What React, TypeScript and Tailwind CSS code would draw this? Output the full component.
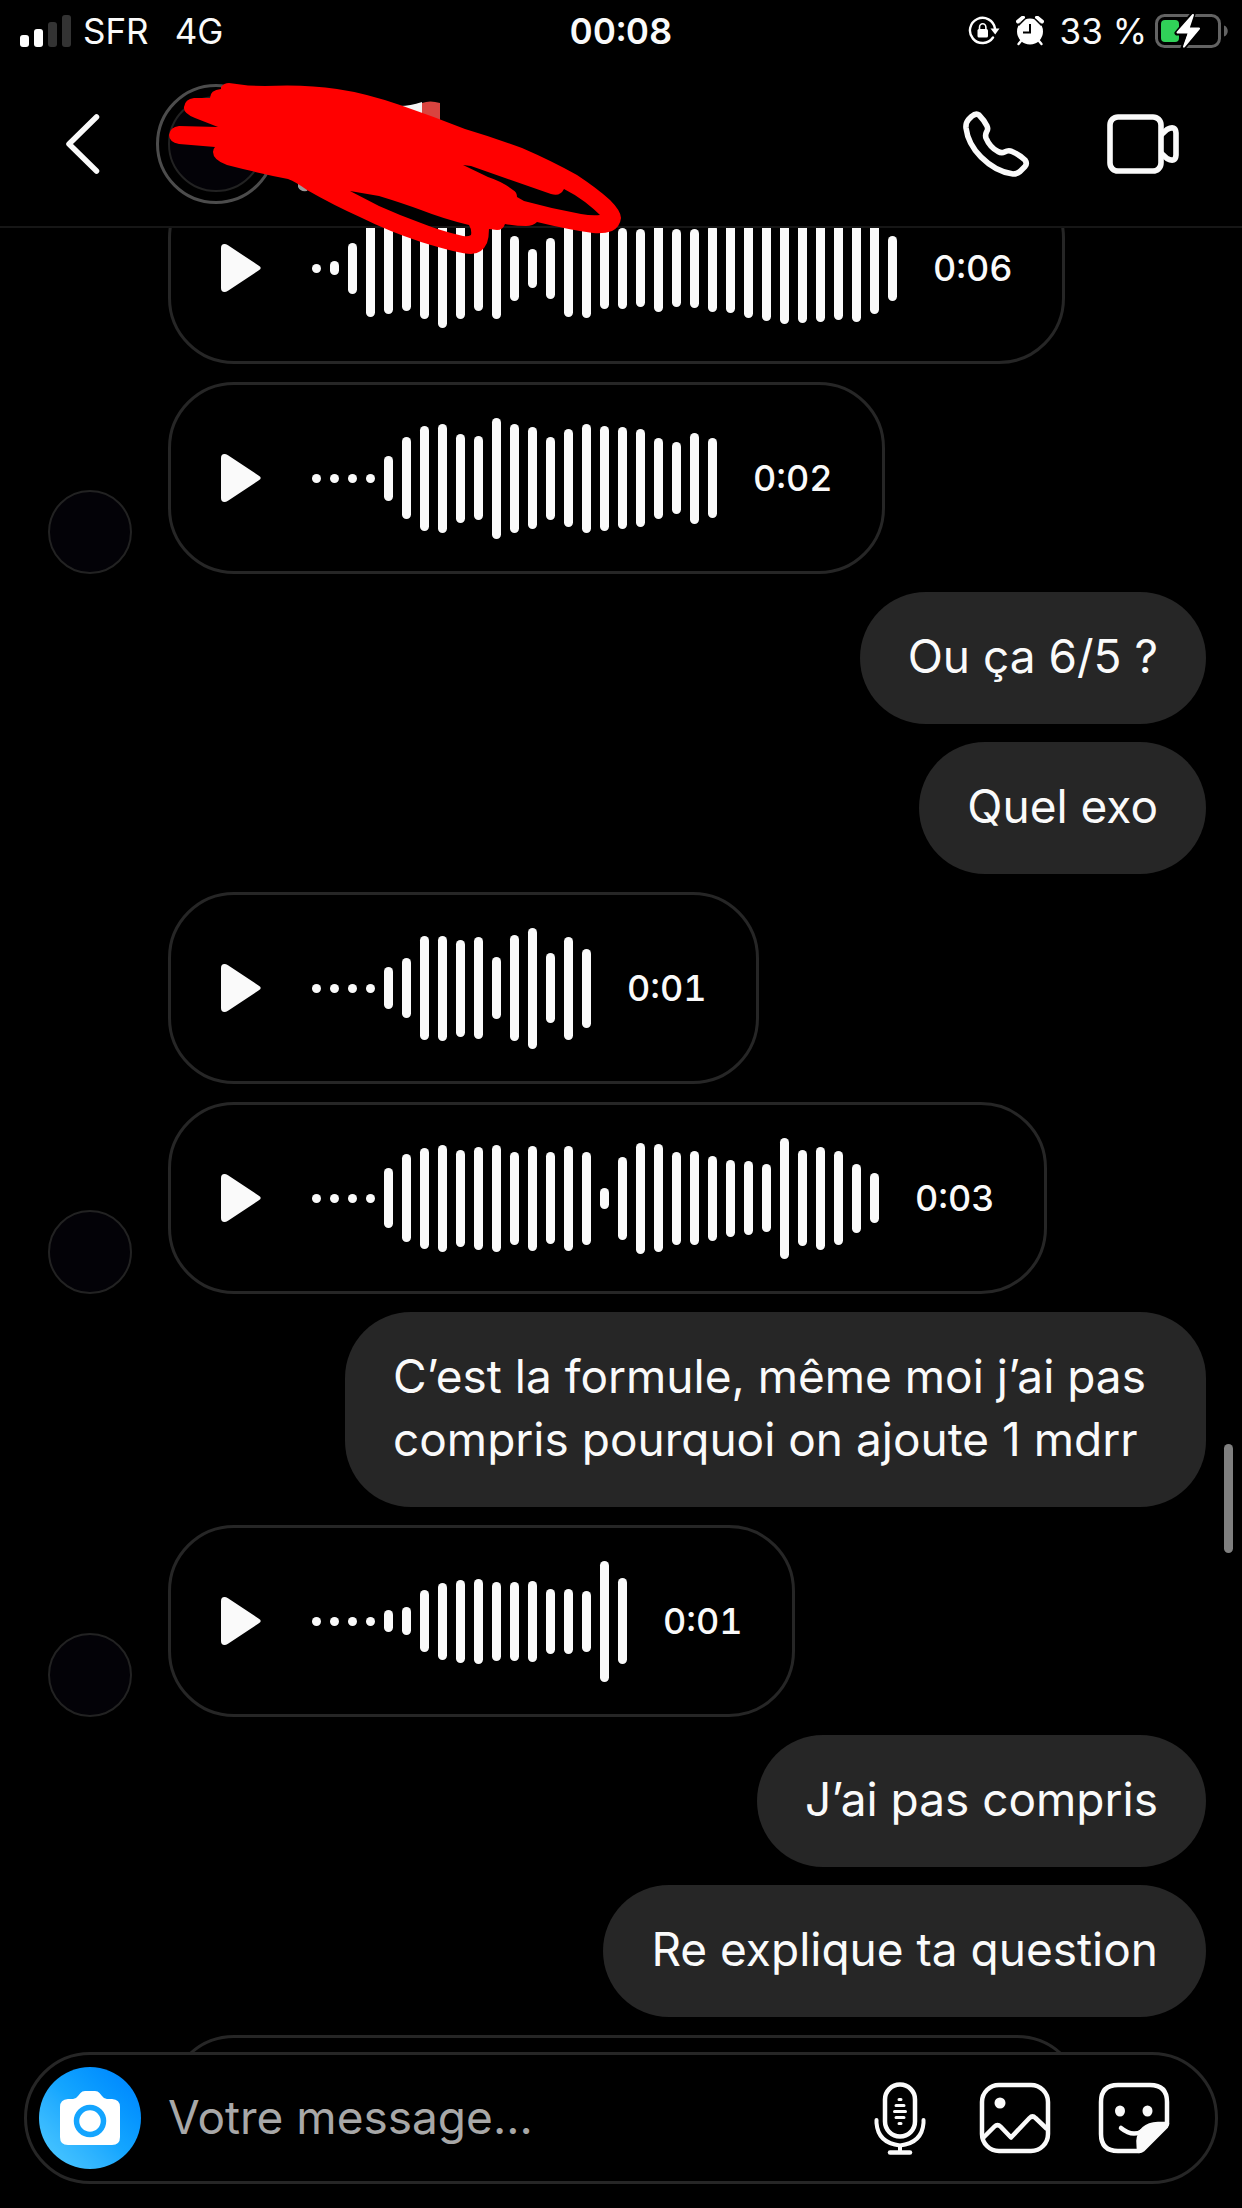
import React from "react";

type Message =
  | { kind: "voice"; duration?: string; bars: number[]; avatar?: boolean }
  | { kind: "text"; text: string };

const messages: Message[] = [
  {
    kind: "voice",
    duration: "0:06",
    bars: [
      9, 14, 51, 97, 91, 85, 101, 119, 101, 85, 101, 65, 39, 61, 98, 99, 82, 81, 78, 88, 78, 79, 87,
      89, 99, 105, 112, 110, 107, 103, 107, 91, 65,
    ],
  },
  {
    kind: "voice",
    duration: "0:02",
    avatar: true,
    bars: [
      9, 9, 9, 9, 45, 82, 105, 109, 89, 84, 121, 109, 102, 83, 98, 109, 105, 102, 98, 81, 72, 91, 80,
    ],
  },
  { kind: "text", text: "Ou ça 6/5 ?" },
  { kind: "text", text: "Quel exo" },
  {
    kind: "voice",
    duration: "0:01",
    bars: [9, 9, 9, 9, 42, 60, 104, 105, 97, 102, 62, 106, 121, 70, 103, 79],
  },
  {
    kind: "voice",
    duration: "0:03",
    avatar: true,
    bars: [
      9, 9, 9, 9, 60, 88, 101, 107, 97, 103, 107, 93, 105, 92, 105, 93, 21, 83, 111, 108, 93, 94, 85,
      77, 74, 68, 121, 96, 103, 94, 69, 50,
    ],
  },
  { kind: "text", text: "C’est la formule, même moi j’ai pas compris pourquoi on ajoute 1 mdrr" },
  {
    kind: "voice",
    duration: "0:01",
    avatar: true,
    bars: [9, 9, 9, 9, 22, 28, 62, 77, 83, 85, 79, 79, 81, 65, 65, 61, 121, 86],
  },
  { kind: "text", text: "J’ai pas compris" },
  { kind: "text", text: "Re explique ta question" },
  {
    kind: "voice",
    bars: [
      9, 9, 9, 9, 45, 60, 80, 95, 99, 84, 97, 105, 90, 82, 98, 101, 92, 81, 72, 91, 80, 87, 89, 99,
      105, 112, 110, 96, 103, 94, 80, 69, 50, 40,
    ],
  },
];

function StatusBar() {
  return (
    <div className="grid h-[62px] grid-cols-[1fr_auto_1fr] items-center px-[14px] text-[35px] leading-[60px]">
      <div className="flex items-center pl-[6px]">
        <svg viewBox="0 0 51 32" className="h-8 w-[51px]" aria-hidden="true">
          <rect x="0" y="20" width="9" height="12" rx="3" fill="#fff" />
          <rect x="14" y="14" width="9" height="18" rx="3" fill="#fff" />
          <rect x="28" y="7" width="9" height="25" rx="3" fill="#333" />
          <rect x="42" y="0" width="9" height="32" rx="3" fill="#333" />
        </svg>
        <span className="ml-3">SFR</span>
        <span className="ml-[26px]">4G</span>
      </div>
      <time className="text-[36px] font-semibold tabular-nums">00:08</time>
      <div className="flex items-center justify-end">
        <svg viewBox="0 0 32 30" className="h-[30px] w-8" aria-label="Rotation verrouillée">
          <path
            d="M27 12.5A12.6 12.6 0 1 0 25 21.5"
            fill="none"
            stroke="#fff"
            strokeWidth="2.4"
            strokeLinecap="round"
          />
          <path d="M22.5 12.5h9l-4.3 6z" fill="#fff" />
          <rect x="9.5" y="13" width="10.5" height="8.5" rx="1.5" fill="#fff" />
          <path d="M11.5 14v-2.6a3.2 3.6 0 0 1 6.4 0V14" fill="none" stroke="#fff" strokeWidth="1.6" />
        </svg>
        <svg viewBox="0 0 28 30" className="ml-4 h-[30px] w-7" aria-label="Alarme">
          <circle cx="14" cy="15.5" r="13" fill="#fff" />
          <path d="M2 5.5 7 1.5M26 5.5l-5-4" stroke="#fff" strokeWidth="4" strokeLinecap="round" />
          <path d="m5 25-2.5 3M23 25l2.5 3" stroke="#fff" strokeWidth="2.4" strokeLinecap="round" />
          <path d="M14 8v8.5H7" fill="none" stroke="#000" strokeWidth="2" />
          <path d="M2.5 9.5 9 3M25.5 9.5 19 3" stroke="#000" strokeWidth="1.3" />
        </svg>
        <span className="ml-4">33 %</span>
        <svg viewBox="0 0 73 36" className="ml-2 h-9 w-[73px]" aria-label="Batterie en charge">
          <rect x="1.5" y="2.5" width="63" height="31" rx="8" fill="none" stroke="#636363" strokeWidth="3" />
          <path d="M69 12.5c5 1.5 5 9.5 0 11z" fill="#636363" />
          <rect x="6" y="7" width="18" height="22" rx="4" fill="#30d158" />
          <path
            d="M38 1 22 20h11l-5 15 17-20H34z"
            fill="#fff"
            stroke="#000"
            strokeWidth="5"
            strokeLinejoin="round"
            paintOrder="stroke"
          />
          <path d="M38 2 22.5 19.5H34l-5 14L44 15.5H33.5z" fill="#fff" stroke="#fff" strokeWidth="2" strokeLinejoin="round" />
        </svg>
      </div>
    </div>
  );
}

function Scribble() {
  return (
    <svg
      viewBox="160 72 480 188"
      className="pointer-events-none absolute top-[72px] left-40 z-10 h-[188px] w-[480px]"
      aria-hidden="true"
    >
      <path d="M400 106q10 0 22-4v24h-22z" fill="#f4f4f4" />
      <path d="M422 103q8-3 18 0v20h-18z" fill="#d9443f" />
      <path d="M298 180v7q2 5 9 4l3-6z" fill="#9a9a9a" />
      <path
        fill="#f00"
        fillRule="evenodd"
        d="M221 87Q224 83 229 83L248 85.5L265 86Q305 84 337 89Q365 93 400 105Q432 116 465 129Q495 138 522 148Q552 161 577 175Q598 189 610 200Q621 211 621 218Q620 227 612 231Q604 234 593 233Q570 230 537 222Q533 226 526 226Q517 226 505 224Q503 230 497 230L489 229Q489 237 487 243Q482 254 471 254Q460 254 421 242Q388 231 362 218Q333 205 307 190Q296 182 288 179Q258 173 227 165Q213 160 213 152Q213 149 215 147L179 144Q169 142 169 135Q170 127 179 126L218 127L195 118Q183 113 184 107Q185 99 194 98L210 98Q210 90 221 89Z
        M463 165L471 166L551 194Q560 197 564 189Q576 195 585 202Q594 209 600 215Q592 216 581 214Q553 209 524 201L517 197Q517 192 513 190Q503 182 488 177Z
        M350 191L379 196Q402 203 421 210Q444 219 469 225Q472 230 471 235Q468 237 463 236Q441 231 421 223Q399 215 379 206Z"
      />
    </svg>
  );
}

function Header() {
  return (
    <header className="relative shrink-0 border-b-2 border-[#161616]">
      <StatusBar />
      <div className="flex h-[164px] items-center pr-[62px] pl-[62px]">
        <button type="button" aria-label="Retour" className="mr-[54px]">
          <svg viewBox="0 0 40 64" className="h-16 w-10" fill="none" stroke="#fafafa" strokeWidth="5.5" strokeLinecap="round" strokeLinejoin="round">
            <path d="M34.5 5 7 32l27.5 27" />
          </svg>
        </button>
        <div className="flex size-[120px] items-center justify-center rounded-full border-3 border-[#4c4c4c]">
          <div className="size-24 rounded-full border-2 border-[#222] bg-[#030207]" />
        </div>
        <div className="ml-auto flex items-center gap-[76px]">
          <button type="button" aria-label="Appel audio">
            <svg viewBox="0 0 68 68" className="size-[68px]" fill="none" stroke="#fafafa" strokeWidth="5.6" strokeLinejoin="round">
              <path d="M9.5 6.5 6.5 9.5Q3.5 13 4 18Q6 34 19 47Q34 62 51 64Q55 64 58 61.5L63 56.5Q65.5 53.5 63 50Q57 44.5 50 41.5Q46.5 39.8 42.5 42Q39.5 43.5 36 41.5Q28 37.5 24 28Q23 25 24.5 22Q26.5 19.5 25 16Q22 10 17 5Q14 2.5 9.5 6.5Z" />
            </svg>
          </button>
          <button type="button" aria-label="Appel vidéo">
            <svg viewBox="0 0 74 64" className="h-16 w-[74px]" fill="none" stroke="#fafafa" strokeWidth="5.6" strokeLinejoin="round">
              <rect x="4" y="5" width="51" height="54" rx="8" />
              <path d="M55 23 61 17.5Q69.5 13 70 21V43Q69.5 51 61 46.5L55 41" />
            </svg>
          </button>
        </div>
      </div>
      <Scribble />
    </header>
  );
}

function VoiceMessage({ duration, bars, avatar }: { duration?: string; bars: number[]; avatar?: boolean }) {
  return (
    <li className="flex shrink-0 items-end gap-9 self-start pl-12">
      {avatar ? (
        <div className="size-[84px] rounded-full border-2 border-[#222] bg-[#030207]" />
      ) : (
        <div className="size-[84px]" />
      )}
      <div className="flex h-48 items-center rounded-[66px] border-3 border-[#262626] pl-[50px]">
        <button type="button" aria-label="Lire le message vocal">
          <svg viewBox="0 0 40 48" className="h-12 w-10" fill="#fafafa" aria-hidden="true">
            <path d="M0 4Q0 0 3.5 0Q5 0 7 1.3L37.5 21.5Q42 24 37.5 26.5L7 46.7Q5 48 3.5 48Q0 48 0 44Z" />
          </svg>
        </button>
        <div className="ml-[51px] flex items-center gap-[9px]">
          {bars.map((height, i) => (
            <span key={i} className="w-[9px] rounded-full bg-[#fafafa]" style={{ height }} />
          ))}
        </div>
        <span className="ml-9 w-[129px] text-[36px] leading-[44px] font-medium tabular-nums">{duration}</span>
      </div>
    </li>
  );
}

function TextMessage({ text }: { text: string }) {
  return (
    <li className="mr-9 max-w-[861px] shrink-0 self-end rounded-[66px] bg-[#262626] px-12 pt-[33px] pb-9 text-[46px] leading-[63px]">
      {text}
    </li>
  );
}

function Composer() {
  return (
    <footer className="shrink-0 px-6 pb-6">
      <form
        className="flex h-[132px] items-center rounded-full border-3 border-[#262626] pr-[44px] pl-3"
        onSubmit={(e) => e.preventDefault()}
      >
        <button
          type="button"
          aria-label="Appareil photo"
          className="flex size-[102px] shrink-0 items-center justify-center rounded-full bg-linear-to-tr from-[#50ccff] via-[#14a6ff] to-[#0080ff]"
        >
          <svg viewBox="0 0 60 54" className="h-[54px] w-[60px]" fill="#fff">
            <path d="M8 8H13Q16 8 18 5L20.5 2Q22 0 25 0H35Q38 0 39.5 2L42 5Q44 8 47 8H52Q60 8.5 60 16V46Q60 54 52 54H8Q0 54 0 46V16Q0 8.5 8 8Z" />
            <circle cx="30" cy="30" r="13.5" fill="none" stroke="#14a5ff" strokeWidth="5.5" />
          </svg>
        </button>
        <input
          type="text"
          aria-label="Votre message"
          placeholder="Votre message..."
          className="ml-[27px] min-w-0 flex-1 bg-transparent pb-[2px] text-[46px] leading-[63px] outline-none placeholder:text-[#a8a8a8]"
        />
        <div className="flex items-center gap-[45px]">
          <button type="button" aria-label="Message vocal" className="flex w-[66px] justify-center">
            <svg viewBox="0 0 54 74" className="h-[74px] w-[54px]" fill="none" stroke="#fafafa" strokeWidth="4" strokeLinecap="round">
              <rect x="12" y="3.5" width="30" height="52" rx="15" strokeWidth="4.5" />
              <path d="M3.5 39v3Q5 62 27 64.5Q49 62 50.5 42v-3M27 65v5" />
              <path d="M17 71.5H37" strokeWidth="4.5" />
              <path d="M26 18.5h2M23 24.5h8M21.5 30.5h11M23 36.5h8M26 42.5h2" strokeWidth="3" />
            </svg>
          </button>
          <button type="button" aria-label="Galerie">
            <svg viewBox="0 0 74 74" className="size-[74px]" fill="none" stroke="#fafafa" strokeWidth="4.5" strokeLinejoin="round">
              <rect x="4" y="4" width="66" height="66" rx="17" />
              <circle cx="22" cy="22" r="5.5" fill="#fafafa" stroke="none" />
              <path d="M5 57 16.5 45.5Q19.5 42.5 22.5 45.5L33 56.5L51.5 37Q54.5 34 57.5 37L69 48" />
            </svg>
          </button>
          <button type="button" aria-label="Autocollants">
            <svg viewBox="0 0 74 74" className="size-[74px]" fill="none" stroke="#fafafa" strokeWidth="4.5" strokeLinecap="round" strokeLinejoin="round">
              <path d="M70 43V21Q70 4 53 4H21Q4 4 4 21V53Q4 70 21 70H42" />
              <path d="M70 43H61Q43 44 41.5 60L42 70Q44 70 46 68.5L69 45.5Z" fill="#fafafa" />
              <path d="M24 47Q36 57 47 49" />
              <ellipse cx="23" cy="30" rx="5" ry="5.5" fill="#fafafa" stroke="none" />
              <ellipse cx="50.5" cy="30" rx="5" ry="5.5" fill="#fafafa" stroke="none" />
            </svg>
          </button>
        </div>
      </form>
    </footer>
  );
}

export default function App() {
  return (
    <div className="flex h-screen flex-col overflow-hidden bg-black font-['Inter',sans-serif] text-[#fafafa]">
      <Header />
      <main className="relative min-h-0 flex-1 overflow-hidden">
        <ul className="-mt-14 flex flex-col gap-[18px]">
          {messages.map((m, i) =>
            m.kind === "voice" ? (
              <VoiceMessage key={i} duration={m.duration} bars={m.bars} avatar={m.avatar} />
            ) : (
              <TextMessage key={i} text={m.text} />
            ),
          )}
        </ul>
        <div className="absolute top-2/3 right-[9px] h-[109px] w-[9px] rounded-full bg-[#7f7f7f]" aria-hidden="true" />
      </main>
      <Composer />
    </div>
  );
}
